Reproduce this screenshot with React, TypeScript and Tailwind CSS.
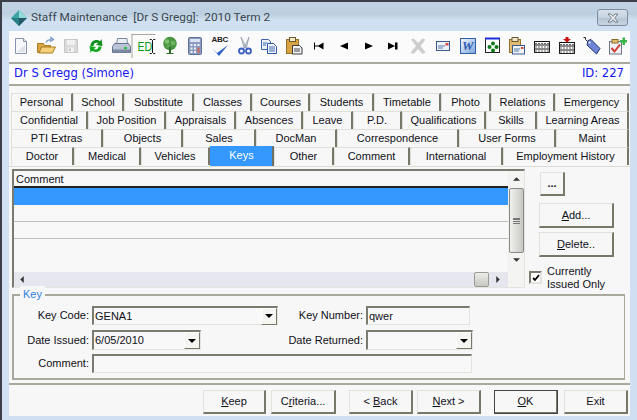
import type { ReactNode } from "react";

const font = "font-['Liberation_Sans',sans-serif] text-[11px] text-[#101018]";
const bevel = "border border-t-[#e2e2dc] border-l-[#e2e2dc] border-r-2 border-b-2 border-r-[#77776a] border-b-[#77776a] bg-[#f7f7f7]";
const sunken = "border-t-2 border-l-2 border-r border-b border-t-[#7a7a6e] border-l-[#7a7a6e] border-r-[#e4e4de] border-b-[#e4e4de] bg-[#f8f8f8]";

type Tab = { label: string; w: string; active?: boolean };

const tabRows: Tab[][] = [
  [
    { label: "Personal", w: "w-[62px]" },
    { label: "School", w: "w-[51px]" },
    { label: "Substitute", w: "w-[70px]" },
    { label: "Classes", w: "w-[58px]" },
    { label: "Courses", w: "w-[58px]" },
    { label: "Students", w: "w-[64px]" },
    { label: "Timetable", w: "w-[67px]" },
    { label: "Photo", w: "w-[50px]" },
    { label: "Relations", w: "w-[64px]" },
    { label: "Emergency", w: "w-[74px]" },
  ],
  [
    { label: "Confidential", w: "w-[77px]" },
    { label: "Job Position", w: "w-[78px]" },
    { label: "Appraisals", w: "w-[70px]" },
    { label: "Absences", w: "w-[67px]" },
    { label: "Leave", w: "w-[50px]" },
    { label: "P.D.", w: "w-[49px]" },
    { label: "Qualifications", w: "w-[84px]" },
    { label: "Skills", w: "w-[51px]" },
    { label: "Learning Areas", w: "w-[92px]" },
  ],
  [
    { label: "PTI Extras", w: "w-[92px]" },
    { label: "Objects", w: "w-[80px]" },
    { label: "Sales", w: "w-[73px]" },
    { label: "DocMan", w: "w-[81px]" },
    { label: "Correspondence", w: "w-[122px]" },
    { label: "User Forms", w: "w-[97px]" },
    { label: "Maint", w: "w-[73px]" },
  ],
  [
    { label: "Doctor", w: "w-[63px]" },
    { label: "Medical", w: "w-[67px]" },
    { label: "Vehicles", w: "w-[69px]" },
    { label: "Keys", w: "w-[64px]", active: true },
    { label: "Other", w: "w-[60px]" },
    { label: "Comment", w: "w-[76px]" },
    { label: "International", w: "w-[93px]" },
    { label: "Employment History", w: "w-[126px]" },
  ],
];

const Ico = ({ children }: { children: ReactNode }) => (
  <svg viewBox="0 0 20 20" className="h-5 w-5">
    {children}
  </svg>
);

const grid = (
  <>
    <rect x="2.500" y="5.500" width="15" height="11" fill="#fff" stroke="#222" />
    <path d="M2 5.500h16M2 9h16M2 13h16" stroke="#111" />
    <path d="M3 7.500h14M3 11h14M3 15h14" stroke="#666" strokeDasharray="2 1" />
  </>
);

const icons: ReactNode[] = [
  <Ico>
    <path d="M4.500 2.500h8l3 3v12h-11z" fill="#f6f8fc" stroke="#8794b0" />
    <path d="M12.500 2.500v3h3" fill="#dfe5f0" stroke="#8794b0" />
    <path d="M6 16l8-7v7z" fill="#dde1ea" />
  </Ico>,
  <Ico>
    <path d="M1.500 7.500h6l1 2h6v7h-13z" fill="#d9a53f" stroke="#a87c20" />
    <path d="M3 17l2.500-6h14l-3 6z" fill="#f3d07c" stroke="#a87c20" />
    <path d="M10 6.500c1-2.500 3-3 5-2.500M15 1.500l2.500 2.200-3 1.500z" fill="none" stroke="#7c9ccb" strokeWidth="1.300" />
  </Ico>,
  <Ico>
    <path d="M3.500 3.500h13v13h-13z" fill="#d9d9d9" stroke="#c6c6c6" />
    <rect x="6" y="4" width="8" height="5" fill="#f0f0f0" />
    <rect x="7" y="11.500" width="6" height="4.500" fill="#f2f2f2" />
    <rect x="8" y="12.500" width="2" height="2.500" fill="#c2c2c2" />
  </Ico>,
  <Ico>
    <path d="M4.500 10c0-4 3-6 6-6 1.500 0 2.500.5 3.500 1.200L15.500 3l1 7-6.500-1 2-2c-2-1-4.500 0-4.500 3z" fill="#0f8f1c" />
    <path d="M15.500 10.500c0 4-3 5.500-6 5.500-1.500 0-2.500-.5-3.500-1.200L4.500 17l-1-7 6.500 1-2 2c2 1 4.500 0 4.500-2.500z" fill="#13a822" />
  </Ico>,
  <Ico>
    <path d="M6.500 2.500h9.500l.5 6H5.500z" fill="#e9edf4" stroke="#7b8aa2" />
    <path d="M1.500 10.500l2-3h14l2 3v6h-18z" fill="#b9c5d6" stroke="#66748b" />
    <rect x="2" y="13.500" width="17" height="3" fill="#7a8aa2" />
    <rect x="13" y="11" width="3" height="2" fill="#2ac33f" />
  </Ico>,
  <div className="flex h-[24px] w-[24px] -translate-x-[1.500px] items-center border-l border-t border-[#a8a89c] pl-[5px] font-['Liberation_Sans',sans-serif] text-[13px] leading-none text-[#0a9a14]">
    <span className="w-[12px] origin-left scale-x-[0.82]">ED</span>
    <svg viewBox="0 0 6 15" className="h-[15px] w-[6px]">
      <path d="M0 .500h2l1 1 1-1h2M3 1.500v12M0 14.500h2l1-1 1 1h2" fill="none" stroke="#111" />
    </svg>
  </div>,
  <Ico>
    <circle cx="10" cy="7.500" r="6.800" fill="#4a9542" />
    <circle cx="7" cy="5.500" r="2.300" fill="#7fc06f" />
    <circle cx="13" cy="7" r="2.300" fill="#6fb45f" />
    <circle cx="8" cy="10" r="1.800" fill="#63a857" />
    <path d="M9 11h2v6h2.500v1h-7v-1h2.500z" fill="#2e6a2c" />
  </Ico>,
  <Ico>
    <rect x="3.500" y="1.500" width="13" height="17" rx="1" fill="#8b9cc0" stroke="#5f6f96" />
    <rect x="5" y="3" width="10" height="3" fill="#dbe3f2" />
    <path d="M5.500 8h2v2h-2zM9 8h2v2H9zM12.500 8h2v2h-2zM5.500 11.500h2v2h-2zM9 11.500h2v2H9zM5.500 15h2v2h-2zM9 15h2v2H9z" fill="#eef1f8" />
    <path d="M12.500 11.500h2V17h-2z" fill="#c9685c" />
  </Ico>,
  <div className="flex h-5 w-5 flex-col items-center">
    <span className="font-['Liberation_Sans',sans-serif] text-[8px] leading-[8px] font-bold tracking-[-0.3px] text-[#222]">ABC</span>
    <svg viewBox="0 0 20 12" className="h-3 w-5">
      <path d="M2 4l5 5L18 1l-9 11z" fill="#2f62c4" />
    </svg>
  </div>,
  <Ico>
    <path d="M6 1l5 10-2 1zM14 1L9.500 11l2 1z" fill="#c2cad6" stroke="#76819a" strokeWidth=".5" />
    <circle cx="6.500" cy="15" r="2.500" fill="none" stroke="#3a60c0" strokeWidth="1.800" />
    <circle cx="13.500" cy="15" r="2.500" fill="none" stroke="#3a60c0" strokeWidth="1.800" />
  </Ico>,
  <Ico>
    <path d="M2.500 3.500h7l2 2v8h-9z" fill="#eef3fb" stroke="#3c67b0" />
    <path d="M8.500 7.500h6l3 3v7h-9z" fill="#f7fafe" stroke="#2c56a2" />
    <path d="M10 11h6M10 13h6M10 15h6M4 7h4M4 9h3" stroke="#3c67b0" />
  </Ico>,
  <Ico>
    <rect x="2.500" y="3.500" width="12" height="14" fill="#d9a443" stroke="#94702a" />
    <rect x="5.500" y="1.500" width="6" height="4" fill="#eeeacc" stroke="#6b5a2e" />
    <path d="M8.500 9.500h7l2.500 2.500v6h-9.500z" fill="#f4f5f8" stroke="#3a3a3a" />
    <path d="M10 13h6M10 15h6" stroke="#444" />
  </Ico>,
  <Ico>
    <path d="M5 6.500h1v7H5zM6 9.500h3v1H6zM8.500 10l6-3.500v7z" fill="#000" />
  </Ico>,
  <Ico>
    <path d="M14 6.500v7L6 10z" fill="#000" />
  </Ico>,
  <Ico>
    <path d="M6 6.500v7l8-3.500z" fill="#000" />
  </Ico>,
  <Ico>
    <path d="M5 6.500v7l7-3.500zM12 6.500h2.500v7H12z" fill="#000" />
  </Ico>,
  <Ico>
    <path d="M3 3.500l3-1 4 4.500 4.500-4.500 3 1L12.500 10l5 6.500-3 1.500-4.500-5L5.500 18l-3-1.500L8 10z" fill="#cdcdcd" />
  </Ico>,
  <Ico>
    <rect x="3.500" y="5.500" width="13" height="9" fill="#eef2f9" stroke="#3a5a90" />
    <path d="M5 10h7M5 12h5" stroke="#5878a8" />
    <rect x="12.500" y="7" width="3" height="2.500" fill="#d8483c" />
  </Ico>,
  <div className="flex h-[16px] w-[16px] items-center justify-center border border-[#2f5fa8] bg-[linear-gradient(135deg,#f2f6fd,#7ea5dc)] font-['Liberation_Serif',serif] text-[13px] font-bold italic leading-none text-[#2d5cb0]">
    W
  </div>,
  <Ico>
    <rect x="2.500" y="2.500" width="14" height="14" fill="#fff" stroke="#222" />
    <rect x="2" y="1.500" width="15" height="2" fill="#1a2ee0" />
    <circle cx="10" cy="7.500" r="2" fill="#0a7a1a" />
    <circle cx="6.500" cy="11" r="2" fill="#0a7a1a" />
    <circle cx="13.500" cy="11" r="2" fill="#0a7a1a" />
    <circle cx="10" cy="14.500" r="2" fill="#0a7a1a" />
  </Ico>,
  <Ico>
    <rect x="2.500" y="3.500" width="11" height="13" fill="#e0bd72" stroke="#94702a" />
    <rect x="5" y="1.500" width="6" height="4" fill="#efeacb" stroke="#6b5a2e" />
    <rect x="5.500" y="9.500" width="12" height="8.500" fill="#f1f4fa" stroke="#3a5a90" />
    <path d="M7 13h6M7 15h5" stroke="#5878a8" />
    <rect x="14" y="11" width="2.500" height="2" fill="#d8483c" />
  </Ico>,
  <Ico>{grid}</Ico>,
  <Ico>
    <g transform="translate(0 1)">{grid}</g>
    <path d="M8.500 1h3v2H14l-4 3.500L6 3h2.500z" fill="#c80e0e" />
  </Ico>,
  <Ico>
    <path d="M1.500 1.500h2v2l3 3" fill="none" stroke="#222" />
    <path d="M6 4.500l3-1 9 9-3.500 5.500-9.500-9z" fill="#6f86d8" stroke="#24346f" />
    <circle cx="7.500" cy="6.500" r="1" fill="#fff" />
  </Ico>,
  <Ico>
    <rect x="2.500" y="5.500" width="12" height="12.500" fill="#eff1f6" stroke="#6c7486" />
    <rect x="5" y="3.500" width="6" height="3.500" fill="#e5bf6d" stroke="#886a28" />
    <path d="M4.500 12l3 3.500 5.500-7" fill="none" stroke="#cf3b30" strokeWidth="2" />
    <path d="M13 4h2.500V1.500H18V4h2v2.500h-2V9h-2.500V6.500H13z" fill="#39b54a" />
  </Ico>,
];

const Btn = ({ className, children, strong }: { className: string; children: ReactNode; strong?: boolean }) => (
  <button className={`${className} ${bevel} flex shrink-0 items-center justify-center ${strong ? "outline outline-1 -outline-offset-1 outline-[#444]" : ""}`}>
    {children}
  </button>
);

const Arrow = () => (
  <span className="flex h-[17px] w-[16px] shrink-0 items-center justify-center border border-t-white border-l-white border-r-[#77776a] border-b-[#77776a] bg-[#f5f5f2]">
    <svg viewBox="0 0 8 4" className="h-1 w-2">
      <path d="M0 0h8L4 4z" fill="#000" />
    </svg>
  </span>
);

const Combo = ({ className, value }: { className: string; value: string }) => (
  <div className={`${className} ${sunken} flex items-center justify-between pl-[1px]`}>
    <span>{value}</span>
    <Arrow />
  </div>
);

const Label = ({ className, children }: { className: string; children: ReactNode }) => (
  <span className={`${className} shrink-0 whitespace-nowrap pr-[3px] text-right`}>{children}</span>
);

export default function App() {
  return (
    <div className={`${font} flex h-[420px] w-[637px] flex-col overflow-hidden border-t-2 border-l-2 border-[#3c3f48] bg-[#d0e0f2]`}>
      {/* title bar */}
      <div className="flex h-[29px] shrink-0 items-center bg-[linear-gradient(#c2d3e3_0%,#bccfe0_40%,#c6d5e2_50%,#cfe0f2_62%,#cfe0f2_100%)] pl-[9px] pr-[7px]">
        <svg viewBox="0 0 16 16" className="mt-[3px] h-[16px] w-[16px]">
          <path d="M8 0l8 8-8 8-8-8z" fill="#3fa3a6" />
          <path d="M8 0l8 8H8z" fill="#8fdcd8" />
          <path d="M0 8l8 8V8z" fill="#2a7f86" />
          <path d="M8 8h8l-8 8z" fill="#245a68" />
        </svg>
        <span className="ml-[4px] mt-[3px] whitespace-pre font-['Roboto',sans-serif] text-[11.800px] text-[#37464f]">
          Staff Maintenance  [Dr S Gregg]:  2010 Term 2
        </span>
        <div className="ml-auto mr-[2px] mt-[2px] flex h-[17px] w-[31px] items-center justify-center rounded-[3px] border border-[#7d8ca0] bg-[linear-gradient(#d6e0ea_0%,#c6d3df_50%,#b4c3d2_52%,#c8d6e4_100%)]">
          <svg viewBox="0 0 12 10" className="h-[10px] w-[12px]">
            <path d="M1 1h3l2 2.500L8 1h3L7.500 5 11 9H8L6 6.500 4 9H1l3.500-4z" fill="#f4f6f8" stroke="#4a5560" strokeWidth=".7" />
          </svg>
        </div>
      </div>

      {/* client */}
      <div className="ml-[7px] mr-[7px] flex h-[385px] w-[621px] shrink-0 flex-col bg-[#f7f7f7]">
        <div className="flex h-[31px] shrink-0 items-center bg-[#fbfbfb]">
          {icons.map((icon, i) => (
            <div key={i} className="flex h-full w-[24.800px] items-center justify-center pb-[2px]">
              {icon}
            </div>
          ))}
        </div>
        <div className="flex h-[24px] shrink-0 items-center justify-between border-y-2 border-y-[#a8a89c] bg-[#fdfdfd] pl-[5px] pr-[6px] font-['DejaVu_Sans',sans-serif] text-[11.6px] text-[#1414f0]">
          <span>Dr S Gregg (Simone)</span>
          <span>ID: 227</span>
        </div>

        {/* tabs */}
        <div className="ml-[2px] mt-[7px] flex w-[618px] flex-col">
          {tabRows.map((row, r) => (
            <div key={r} className="flex h-[18px]">
              {row.map((t) => (
                <div
                  key={t.label}
                  className={`${t.w} flex items-center justify-center border-t border-l ${
                    t.active
                      ? "z-10 -mt-[1px] h-[20px] border-t-[#3399ff] border-l-[#3399ff] border-r-2 border-r-[#6f6f64] bg-[#3399ff] pb-[3px] text-white"
                      : "border-t-[#e0e0da] border-l-[#e0e0da] border-r-2 border-r-[#77776a]"
                  }`}
                >
                  {t.label}
                </div>
              ))}
            </div>
          ))}
        </div>

        {/* page */}
        <div className="mt-[1px] flex flex-1 flex-col border-t border-t-[#dcdcd6] pl-[3px]">
          <div className="mt-[2px] flex h-[119px]">
            <div className={`flex w-[513px] shrink-0 flex-col ${sunken}`}>
              <div className="flex min-h-0 flex-1">
                <div className="flex min-w-0 flex-1 flex-col">
                  <div className="h-[17px] border-b-2 border-b-[#222] pl-[2px] leading-[16px]">Comment</div>
                  <div className="h-[17px] bg-[#3399ff]" />
                  <div className="h-[17px] border-b border-b-[#c0c0ba]" />
                  <div className="h-[17px] border-b border-b-[#c0c0ba]" />
                </div>
                <div className="flex w-[16px] shrink-0 flex-col items-center border-l border-[#eee] bg-[#f4f4f2]">
                  <svg viewBox="0 0 8 4" className="mt-[6px] h-[4px] w-[7px]">
                    <path d="M4 0l4 4H0z" fill="#333" />
                  </svg>
                  <div className="mt-[7px] flex h-[65px] w-[15px] items-center justify-center rounded-[2px] border border-[#8a8a84] bg-[linear-gradient(90deg,#f0f0ee,#c8c8c4)]">
                    <div className="h-[6px] w-[7px] border-y border-[#777] bg-[linear-gradient(#777_1px,transparent_1px)] bg-[length:100%_2px]" />
                  </div>
                  <svg viewBox="0 0 8 4" className="mt-[5px] h-[4px] w-[7px]">
                    <path d="M0 0h8L4 4z" fill="#333" />
                  </svg>
                </div>
              </div>
              <div className="flex h-[15px] shrink-0 items-center">
                <div className="flex h-full flex-1 items-center bg-[#e6e6ee] pl-[6px]">
                  <svg viewBox="0 0 4 8" className="h-[7px] w-[4px]">
                    <path d="M4 0v8L0 4z" fill="#333" />
                  </svg>
                  <div className="ml-auto mr-[7px] h-full w-[15px] rounded-[2px] border border-[#9a9a94] bg-[linear-gradient(#ecece8,#c8c8c2)]" />
                  <svg viewBox="0 0 4 8" className="mr-[8px] h-[7px] w-[4px]">
                    <path d="M0 0v8l4-4z" fill="#333" />
                  </svg>
                </div>
                <div className="h-full w-[16px] bg-[#f4f4f2]" />
              </div>
            </div>

            <div className="ml-[4px] flex flex-col">
              <Btn className="ml-[11px] mt-[3px] h-[24px] w-[25px]">
                <span className="font-bold leading-none">...</span>
              </Btn>
              <Btn className="ml-[10px] mt-[7px] h-[25px] w-[75px]">
                <span><u>A</u>dd...</span>
              </Btn>
              <Btn className="ml-[10px] mt-[4px] h-[25px] w-[75px]">
                <span><u>D</u>elete..</span>
              </Btn>
              <div className="mt-[14px] flex shrink-0">
                <span className="flex h-[13px] w-[13px] shrink-0 items-center justify-center border-2 border-t-[#7a7a6e] border-l-[#7a7a6e] border-r-[#e4e4de] border-b-[#e4e4de] bg-white">
                  <svg viewBox="0 0 8 8" className="h-2 w-2">
                    <path d="M1 4l2 2 4-5" fill="none" stroke="#000" strokeWidth="1.800" />
                  </svg>
                </span>
                <span className="-mt-[6px] ml-[5px] w-[70px] leading-[13px]">Currently Issued Only</span>
              </div>
            </div>
          </div>

          {/* key group */}
          <div className="relative mt-[6px] h-[86px] w-[613px] border-2 border-r border-[#a8a89c]">
            <span className="absolute -top-[10px] left-[6px] bg-[#f7f7f7] px-[3px] text-[#2f7fe0]">Key</span>
            <div className="mt-[10px] flex h-[19px] items-center">
              <Label className="w-[78px]">Key Code:</Label>
              <Combo className="h-[19px] w-[186px]" value="GENA1" />
              <Label className="w-[88px]">Key Number:</Label>
              <div className={`h-[19px] w-[104px] ${sunken} pl-[1px] leading-[16px]`}>qwer</div>
            </div>
            <div className="mt-[5px] flex h-[20px] items-center">
              <Label className="w-[78px]">Date Issued:</Label>
              <Combo className="h-[20px] w-[109px]" value="6/05/2010" />
              <Label className="w-[165px]">Date Returned:</Label>
              <Combo className="h-[20px] w-[107px]" value="" />
            </div>
            <div className="mt-[4px] flex h-[19px] items-center">
              <Label className="w-[78px]">Comment:</Label>
              <div className={`h-[19px] w-[380px] ${sunken}`} />
            </div>
          </div>
        </div>

        {/* bottom bar */}
        <div className="flex h-[33px] shrink-0 items-start border-t-2 border-t-[#a8a89c] pt-[5px]">
          <Btn className="ml-[194px] h-[24px] w-[63px]"><span><u>K</u>eep</span></Btn>
          <Btn className="ml-[5px] h-[24px] w-[65px]"><span>C<u>r</u>iteria...</span></Btn>
          <Btn className="ml-[13px] h-[24px] w-[64px]"><span>&lt; <u>B</u>ack</span></Btn>
          <Btn className="ml-[4px] h-[24px] w-[64px]"><span><u>N</u>ext &gt;</span></Btn>
          <Btn strong className="ml-[13px] h-[24px] w-[64px]"><span><u>O</u>K</span></Btn>
          <Btn className="ml-[6px] h-[24px] w-[64px]"><span>Exit</span></Btn>
        </div>
      </div>
    </div>
  );
}
